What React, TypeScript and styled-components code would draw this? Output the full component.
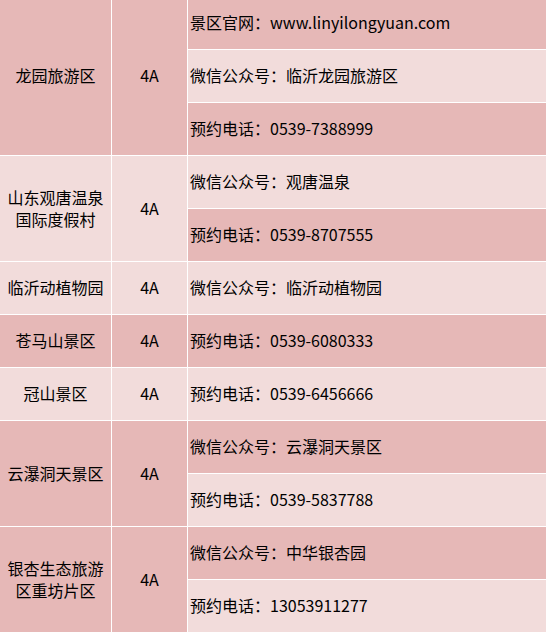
import { createGlobalStyle } from "styled-components";
import styled from "styled-components";

const GlobalStyle = createGlobalStyle`
  html, body {
    margin: 0;
    padding: 0;
    background: #ffffff;
    overflow: hidden;
  }
  body {
    font-family: "Noto Sans CJK SC", "Noto Sans", sans-serif;
    color: #000000;
  }
`;

type Tone = "dark" | "light";

type InfoLine = { text: string; tone: Tone };

type Spot = {
  name: string;
  level: string;
  tone: Tone;
  info: InfoLine[];
};

const spots: Spot[] = [
  {
    name: "龙园旅游区",
    level: "4A",
    tone: "dark",
    info: [
      { text: "景区官网：www.linyilongyuan.com", tone: "dark" },
      { text: "微信公众号：临沂龙园旅游区", tone: "light" },
      { text: "预约电话：0539-7388999", tone: "dark" },
    ],
  },
  {
    name: "山东观唐温泉国际度假村",
    level: "4A",
    tone: "light",
    info: [
      { text: "微信公众号：观唐温泉", tone: "light" },
      { text: "预约电话：0539-8707555", tone: "dark" },
    ],
  },
  {
    name: "临沂动植物园",
    level: "4A",
    tone: "light",
    info: [{ text: "微信公众号：临沂动植物园", tone: "light" }],
  },
  {
    name: "苍马山景区",
    level: "4A",
    tone: "dark",
    info: [{ text: "预约电话：0539-6080333", tone: "dark" }],
  },
  {
    name: "冠山景区",
    level: "4A",
    tone: "light",
    info: [{ text: "预约电话：0539-6456666", tone: "light" }],
  },
  {
    name: "云瀑洞天景区",
    level: "4A",
    tone: "dark",
    info: [
      { text: "微信公众号：云瀑洞天景区", tone: "dark" },
      { text: "预约电话：0539-5837788", tone: "light" },
    ],
  },
  {
    name: "银杏生态旅游区重坊片区",
    level: "4A",
    tone: "dark",
    info: [
      { text: "微信公众号：中华银杏园", tone: "dark" },
      { text: "预约电话：13053911277", tone: "light" },
    ],
  },
];

const toneColor = (tone: Tone) => (tone === "dark" ? "#e6b8b7" : "#f2dcdb");

export default function App() {
  return (
    <>
      <GlobalStyle />
      <Table>
        <colgroup>
          <col style={{ width: 112 }} />
          <col style={{ width: 76 }} />
          <col />
        </colgroup>
        <tbody>
          {spots.map((spot) =>
            spot.info.map((line, i) => (
              <tr key={spot.name + i}>
                {i === 0 && (
                  <>
                    <NameCell rowSpan={spot.info.length} $tone={spot.tone}>
                      {spot.name}
                    </NameCell>
                    <LevelCell rowSpan={spot.info.length} $tone={spot.tone}>
                      {spot.level}
                    </LevelCell>
                  </>
                )}
                <InfoCell $tone={line.tone}>{line.text}</InfoCell>
              </tr>
            ))
          )}
        </tbody>
      </Table>
    </>
  );
}

const Table = styled.table`
  border-collapse: collapse;
  table-layout: fixed;
  width: 548px;
  margin: -4px 0 0 -1px;
  font-size: 16px;
  line-height: 22px;
`;

const Cell = styled.td<{ $tone: Tone }>`
  background: ${({ $tone }) => toneColor($tone)};
  border: 1px solid #ffffff;
  height: 50px;
  padding: 0 0 2px;
  vertical-align: middle;
`;

const NameCell = styled(Cell)`
  text-align: center;
  padding-left: 7px;
  padding-right: 7px;
`;

const LevelCell = styled(Cell)`
  text-align: center;
`;

const InfoCell = styled(Cell)`
  text-align: left;
  padding-left: 2px;
  white-space: nowrap;
`;
